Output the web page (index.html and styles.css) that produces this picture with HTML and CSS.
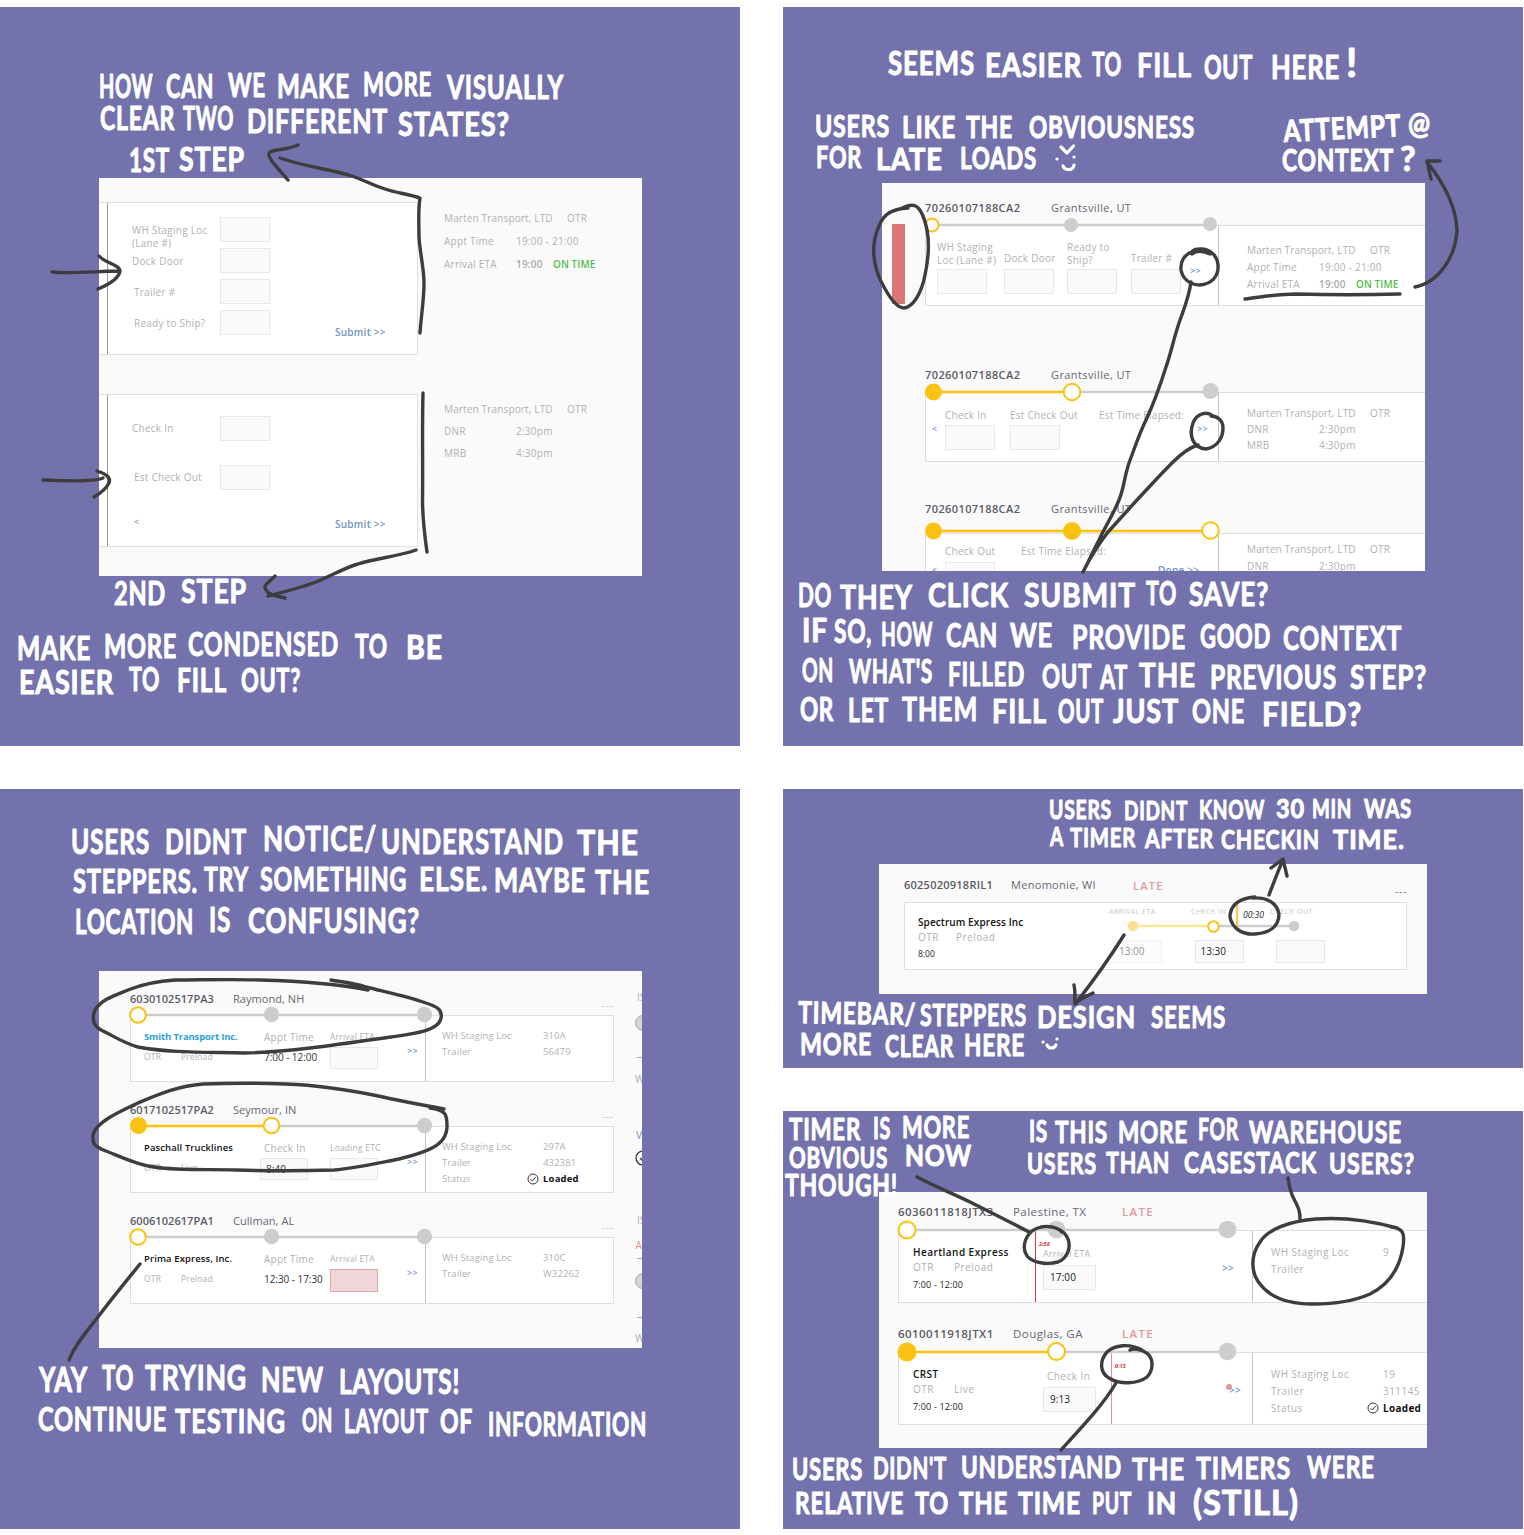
FILE: index.html
```
<!DOCTYPE html>
<html lang="en">
<head>
<meta charset="utf-8">
<title>Usability notes</title>
<link rel="stylesheet" href="styles.css">
</head>
<body>
<main class="board">
  <section class="panel tall">
    <div class="mock mock-forms">
      <div class="form-card">
        <div class="form-body">
          <span class="lbl">WH Staging Loc<br>(Lane #)</span><span class="field"></span><span></span>
          <span class="lbl">Dock Door</span><span class="field"></span><span></span>
          <span class="lbl indent">Trailer #</span><span class="field"></span><span></span>
          <span class="lbl indent">Ready to Ship?</span><span class="field"></span><span class="submit">Submit &gt;&gt;</span>
        </div>
      </div>
      <div class="info first">
        <p><span class="wide">Marten Transport, LTD</span><span>OTR</span></p>
        <p><span class="key">Appt Time</span><span>19:00 - 21:00</span></p>
        <p><span class="key">Arrival ETA</span><b class="time">19:00</b><b class="ok">ON TIME</b></p>
      </div>
      <div class="form-card">
        <div class="form-body second">
          <span class="lbl">Check In</span><span class="field"></span><span></span>
          <span class="lbl indent">Est Check Out</span><span class="field"></span><span></span>
          <span class="back">&lt;</span><span></span><span class="submit">Submit &gt;&gt;</span>
        </div>
      </div>
      <div class="info">
        <p><span class="wide">Marten Transport, LTD</span><span>OTR</span></p>
        <p><span class="key">DNR</span><span>2:30pm</span></p>
        <p><span class="key">MRB</span><span>4:30pm</span></p>
      </div>
    </div>
    <svg class="notes" viewBox="0 7 740 739">
      <g class="hand s32">
        <text x="99" y="98" textLength="54" lengthAdjust="spacingAndGlyphs">HOW</text>
        <text x="166" y="98" textLength="48" lengthAdjust="spacingAndGlyphs">CAN</text>
        <text x="228" y="97" textLength="38" lengthAdjust="spacingAndGlyphs">WE</text>
        <text x="277" y="98" textLength="73" lengthAdjust="spacingAndGlyphs">MAKE</text>
        <text x="363" y="96" textLength="69" lengthAdjust="spacingAndGlyphs">MORE</text>
        <text x="447" y="99" textLength="117" lengthAdjust="spacingAndGlyphs">VISUALLY</text>
        <text x="100" y="130" textLength="75" lengthAdjust="spacingAndGlyphs">CLEAR</text>
        <text x="183" y="130" textLength="51" lengthAdjust="spacingAndGlyphs">TWO</text>
        <text x="247" y="133" textLength="141" lengthAdjust="spacingAndGlyphs">DIFFERENT</text>
        <text x="398" y="136" textLength="112" lengthAdjust="spacingAndGlyphs">STATES?</text>
        <text x="129" y="172" textLength="41" lengthAdjust="spacingAndGlyphs">1ST</text>
        <text x="179" y="171" textLength="66" lengthAdjust="spacingAndGlyphs">STEP</text>
        <text x="114" y="605" textLength="52" lengthAdjust="spacingAndGlyphs">2ND</text>
        <text x="181" y="603" textLength="66" lengthAdjust="spacingAndGlyphs">STEP</text>
        <text x="17" y="660" textLength="74" lengthAdjust="spacingAndGlyphs">MAKE</text>
        <text x="104" y="658" textLength="73" lengthAdjust="spacingAndGlyphs">MORE</text>
        <text x="188" y="656" textLength="151" lengthAdjust="spacingAndGlyphs">CONDENSED</text>
        <text x="355" y="658" textLength="33" lengthAdjust="spacingAndGlyphs">TO</text>
        <text x="406" y="659" textLength="37" lengthAdjust="spacingAndGlyphs">BE</text>
        <text x="19" y="694" textLength="95" lengthAdjust="spacingAndGlyphs">EASIER</text>
        <text x="129" y="691" textLength="31" lengthAdjust="spacingAndGlyphs">TO</text>
        <text x="177" y="692" textLength="50" lengthAdjust="spacingAndGlyphs">FILL</text>
        <text x="241" y="692" textLength="60" lengthAdjust="spacingAndGlyphs">OUT?</text>
      </g>
      <g class="ink">
        <path d="M298 145C287 150 276 149 270 152C265 156 277 167 288 180M280 158C303 166 327 169 349 175C362 179 372 185 385 189C396 193 409 194 420 198C418 210 419 224 419 237C420 254 424 268 424 283C424 300 421 317 420 333"/>
        <path d="M52 272C74 274 97 271 119 271M99 256C105 263 120 265 120 271C119 278 110 284 98 289"/>
        <path d="M43 480C64 481 94 482 103 478M97 471C106 474 111 477 109 483C106 489 101 493 94 497"/>
        <path d="M423 393C422 430 423 467 422.500 503C423 523 425 538 427 552M416 550C396 557 377 558 358 564C344 568 331 576 316 582C300 588 284 592 268 596M275 576C270 582 262 585 266 590C269 596 278 596 285 598"/>
      </g>
    </svg>
  </section>

  <section class="panel tall">
    <div class="mock mock-steps">
      <i class="flag"></i>
      <article class="load">
        <h3><b>70260107188CA2</b><span>Grantsville, UT</span></h3>
        <div class="card c1">
          <svg class="stepper" viewBox="925 215 300 20"><path class="gl" d="M937 225H1210"/><circle class="ring" cx="932" cy="225" r="6.500"/><circle class="gd" cx="1071" cy="225" r="7"/><circle class="gd" cx="1210" cy="224" r="7"/></svg>
          <div class="cell"><span class="two">WH Staging<br>Loc (Lane #)</span><i class="field"></i></div>
          <div class="cell"><span class="one">Dock Door</span><i class="field"></i></div>
          <div class="cell"><span class="two">Ready to<br>Ship?</span><i class="field"></i></div>
          <div class="cell"><span class="one">Trailer #</span><i class="field"></i></div>
          <div class="next">&gt;&gt;</div>
          <div class="details">
            <p><span class="wide">Marten Transport, LTD</span><span>OTR</span></p>
            <p><span class="key">Appt Time</span><span>19:00 - 21:00</span></p>
            <p><span class="key">Arrival ETA</span><b class="time">19:00</b><b class="ok">ON TIME</b></p>
          </div>
        </div>
      </article>
      <article class="load">
        <h3><b>70260107188CA2</b><span>Grantsville, UT</span></h3>
        <div class="card c2">
          <svg class="stepper" viewBox="925 382 300 20"><path class="yl" d="M933 392H1072"/><path class="gl" d="M1072 392H1210"/><circle class="yd" cx="933.500" cy="392" r="8.500"/><circle class="ring" cx="1072" cy="392" r="8.300"/><circle class="gd" cx="1210.500" cy="391" r="8"/></svg>
          <div class="prev">&lt;</div>
          <div class="cell"><span>Check In</span><i class="field"></i></div>
          <div class="cell"><span>Est Check Out</span><i class="field"></i></div>
          <div class="cell"><span>Est Time Elapsed:</span></div>
          <div class="next">&gt;&gt;</div>
          <div class="details">
            <p><span class="wide">Marten Transport, LTD</span><span>OTR</span></p>
            <p><span class="key">DNR</span><span>2:30pm</span></p>
            <p><span class="key">MRB</span><span>4:30pm</span></p>
          </div>
        </div>
      </article>
      <article class="load">
        <h3><b>70260107188CA2</b><span>Grantsville, UT</span></h3>
        <div class="card c3">
          <svg class="stepper" viewBox="925 523 300 20"><path class="yl" d="M933 531H1210"/><circle class="yd" cx="933.500" cy="531" r="8.500"/><circle class="yd" cx="1072" cy="531" r="9"/><circle class="ring" cx="1210.500" cy="530.500" r="8.300"/></svg>
          <div class="prev">&lt;</div>
          <div class="cell"><span>Check Out</span><i class="field"></i></div>
          <div class="cell"><span>Est Time Elapsed:</span></div>
          <div class="next done">Done &gt;&gt;</div>
          <div class="details">
            <p><span class="wide">Marten Transport, LTD</span><span>OTR</span></p>
            <p><span class="key">DNR</span><span>2:30pm</span></p>
          </div>
        </div>
      </article>
    </div>
    <svg class="notes" viewBox="783 7 740 739">
      <g class="hand s32">
        <text x="888" y="75" textLength="87" lengthAdjust="spacingAndGlyphs">SEEMS</text>
        <text x="985" y="77" textLength="97" lengthAdjust="spacingAndGlyphs">EASIER</text>
        <text x="1092" y="76" textLength="30" lengthAdjust="spacingAndGlyphs">TO</text>
        <text x="1137" y="77" textLength="55" lengthAdjust="spacingAndGlyphs">FILL</text>
        <text x="1204" y="79" textLength="49" lengthAdjust="spacingAndGlyphs">OUT</text>
        <text x="1271" y="79" textLength="69" lengthAdjust="spacingAndGlyphs">HERE</text>
        <text class="s40" x="1346" y="77">!</text>
        <g class="s30">
          <text x="815" y="137" textLength="75" lengthAdjust="spacingAndGlyphs">USERS</text>
          <text x="902" y="138" textLength="54" lengthAdjust="spacingAndGlyphs">LIKE</text>
          <text x="966" y="138" textLength="47" lengthAdjust="spacingAndGlyphs">THE</text>
          <text x="1029" y="138" textLength="166" lengthAdjust="spacingAndGlyphs">OBVIOUSNESS</text>
          <text x="816" y="168" textLength="46" lengthAdjust="spacingAndGlyphs">FOR</text>
          <text x="876" y="170" textLength="67" lengthAdjust="spacingAndGlyphs">LATE</text>
          <text x="960" y="169" textLength="77" lengthAdjust="spacingAndGlyphs">LOADS</text>
          <text x="1284" y="142" textLength="118" lengthAdjust="spacingAndGlyphs" transform="rotate(-3 1284 142)">ATTEMPT</text>
          <text x="1408" y="134" textLength="23" lengthAdjust="spacingAndGlyphs">@</text>
          <text x="1282" y="171" textLength="112" lengthAdjust="spacingAndGlyphs">CONTEXT</text>
          <text class="s34" x="1400" y="171">?</text>
        </g>
        <text x="798" y="607" textLength="34" lengthAdjust="spacingAndGlyphs">DO</text>
        <text x="840" y="609" textLength="73" lengthAdjust="spacingAndGlyphs">THEY</text>
        <text x="928" y="607" textLength="81" lengthAdjust="spacingAndGlyphs">CLICK</text>
        <text x="1024" y="607" textLength="112" lengthAdjust="spacingAndGlyphs">SUBMIT</text>
        <text x="1146" y="605" textLength="31" lengthAdjust="spacingAndGlyphs">TO</text>
        <text x="1189" y="606" textLength="80" lengthAdjust="spacingAndGlyphs">SAVE?</text>
        <text x="802" y="642" textLength="26" lengthAdjust="spacingAndGlyphs">IF</text>
        <text x="834" y="643" textLength="38" lengthAdjust="spacingAndGlyphs">SO,</text>
        <text x="881" y="646" textLength="52" lengthAdjust="spacingAndGlyphs">HOW</text>
        <text x="946" y="647" textLength="52" lengthAdjust="spacingAndGlyphs">CAN</text>
        <text x="1010" y="647" textLength="43" lengthAdjust="spacingAndGlyphs">WE</text>
        <text x="1072" y="649" textLength="114" lengthAdjust="spacingAndGlyphs">PROVIDE</text>
        <text x="1200" y="648" textLength="71" lengthAdjust="spacingAndGlyphs">GOOD</text>
        <text x="1283" y="650" textLength="119" lengthAdjust="spacingAndGlyphs">CONTEXT</text>
        <text x="802" y="682" textLength="32" lengthAdjust="spacingAndGlyphs">ON</text>
        <text x="849" y="683" textLength="84" lengthAdjust="spacingAndGlyphs">WHAT'S</text>
        <text x="948" y="686" textLength="77" lengthAdjust="spacingAndGlyphs">FILLED</text>
        <text x="1042" y="688" textLength="50" lengthAdjust="spacingAndGlyphs">OUT</text>
        <text x="1100" y="689" textLength="28" lengthAdjust="spacingAndGlyphs">AT</text>
        <text x="1139" y="687" textLength="57" lengthAdjust="spacingAndGlyphs">THE</text>
        <text x="1210" y="689" textLength="127" lengthAdjust="spacingAndGlyphs">PREVIOUS</text>
        <text x="1350" y="689" textLength="77" lengthAdjust="spacingAndGlyphs">STEP?</text>
        <text x="800" y="721" textLength="34" lengthAdjust="spacingAndGlyphs">OR</text>
        <text x="848" y="722" textLength="41" lengthAdjust="spacingAndGlyphs">LET</text>
        <text x="902" y="721" textLength="76" lengthAdjust="spacingAndGlyphs">THEM</text>
        <text x="992" y="723" textLength="55" lengthAdjust="spacingAndGlyphs">FILL</text>
        <text x="1058" y="723" textLength="46" lengthAdjust="spacingAndGlyphs">OUT</text>
        <text x="1113" y="723" textLength="66" lengthAdjust="spacingAndGlyphs">JUST</text>
        <text x="1192" y="723" textLength="53" lengthAdjust="spacingAndGlyphs">ONE</text>
        <text x="1262" y="726" textLength="100" lengthAdjust="spacingAndGlyphs">FIELD?</text>
      </g>
      <path class="face" d="M1057 159h.1M1074 157h.1M1061 147l6 6l6.500 -7M1063 166c2 5 10 5 11 -1"/>
      <g class="ink">
        <path d="M908 208C893 209 884 213 879 226C870 246 873 268 884 287C891 300 898 308 904 308C914 307 922 291 925 275C930 252 930 233 923 216C918 204 913 203 902 208"/>
        <path d="M1192 252C1185 254 1180 261 1181 270C1183 280 1191 285 1200 285C1211 284 1219 277 1218 265C1217 254 1208 248 1199 249C1193 249 1191 252 1192 254C1197 250 1204 251 1210 254M1191 282C1189 297 1184 309 1180 320C1174 337 1171 353 1166 367C1160 386 1154 403 1146 420C1139 434 1134 450 1129 463C1124 478 1124 488 1119 500C1113 515 1105 527 1099 540C1093 551 1089 561 1083 572C1090 558 1098 545 1108 532C1118 521 1127 511 1137 500C1150 486 1161 474 1173 462C1181 454 1188 448 1198 445"/>
        <path d="M1213 416C1207 411 1197 413 1193 423C1188 437 1194 448 1206 449C1218 447 1223 437 1223 428C1223 420 1217 416 1211 416"/>
        <path d="M1245 299C1262 297 1277 294 1296 294C1331 295 1366 295 1400 294M1415 287C1440 282 1456 255 1457 230C1456 205 1443 182 1427 162M1440 161H1427L1431 179"/>
      </g>
    </svg>
  </section>

  <section class="panel tall">
    <div class="mock mock-list">
      <div class="loads">
        <article class="load">
          <h3><b>6030102517PA3</b><span>Raymond, NH</span><i class="more">---</i></h3>
          <div class="card">
            <svg class="stepper" viewBox="130 1005 310 20"><path class="gl" d="M138 1015H424"/><circle class="ring" cx="138" cy="1015" r="7.800"/><circle class="gd" cx="271.500" cy="1014.500" r="7.700"/><circle class="gd" cx="424.500" cy="1014.500" r="7.700"/></svg>
            <div class="cell"><b class="link">Smith Transport Inc.</b><span class="sm"><u>OTR</u>Preload</span></div>
            <div class="cell"><span>Appt Time</span><span class="val">7:00 - 12:00</span></div>
            <div class="cell"><span class="sm">Arrival ETA</span><i class="field"></i></div>
            <div class="next">&gt;&gt;</div>
            <div class="details"><p><span class="key">WH Staging Loc</span><span>310A</span></p><p><span class="key">Trailer</span><span>56479</span></p></div>
          </div>
        </article>
        <article class="load">
          <h3><b>6017102517PA2</b><span>Seymour, IN</span><i class="more">---</i></h3>
          <div class="card">
            <svg class="stepper" viewBox="130 1005 310 20"><path class="yl" d="M138 1015H271"/><path class="gl" d="M271 1015H424"/><circle class="yd" cx="138.500" cy="1014.500" r="8.600"/><circle class="ring" cx="271.500" cy="1014.500" r="7.800"/><circle class="gd" cx="424.500" cy="1014.500" r="7.700"/></svg>
            <div class="cell"><b>Paschall Trucklines</b><span class="sm"><u>OTR</u>Live</span></div>
            <div class="cell"><span>Check In</span><i class="field checkin">8:40</i></div>
            <div class="cell"><span class="sm">Loading ETC</span><i class="field"></i></div>
            <div class="next">&gt;&gt;</div>
            <div class="details"><p><span class="key">WH Staging Loc</span><span>297A</span></p><p><span class="key">Trailer</span><span>432381</span></p><p><span class="key">Status</span><b class="loaded"><svg class="tick" viewBox="0 0 12 12"><circle cx="6" cy="6" r="5"/><path d="M3.500 6.200L5.300 8L8.700 4"/></svg>Loaded</b></p></div>
          </div>
        </article>
        <article class="load">
          <h3><b>6006102617PA1</b><span>Cullman, AL</span><i class="more">---</i></h3>
          <div class="card">
            <svg class="stepper" viewBox="130 1005 310 20"><path class="gl" d="M138 1015H424"/><circle class="ring" cx="138" cy="1015" r="7.800"/><circle class="gd" cx="271.500" cy="1014.500" r="7.700"/><circle class="gd" cx="424.500" cy="1014.500" r="7.700"/></svg>
            <div class="cell"><b>Prima Express, Inc.</b><span class="sm"><u>OTR</u>Preload</span></div>
            <div class="cell"><span>Appt Time</span><span class="val">12:30 - 17:30</span></div>
            <div class="cell"><span class="sm">Arrival ETA</span><i class="field late-field"></i></div>
            <div class="next">&gt;&gt;</div>
            <div class="details"><p><span class="key">WH Staging Loc</span><span>310C</span></p><p><span class="key">Trailer</span><span>W32262</span></p></div>
          </div>
        </article>
      </div>
      <svg class="edge" viewBox="634 971 8 377">
        <text x="637" y="1001">IS</text><text x="635" y="1083">W</text><text class="blue" x="636" y="1139">V</text><text x="637" y="1224">IS</text><text class="red" x="635.500" y="1249">A</text><text x="635" y="1342">W</text>
        <path class="thin" d="M637 1057.500H642M637 1258.500H642M637 1317.500H642"/>
        <circle class="gc" cx="643" cy="1023" r="7.500"/><circle class="gc" cx="643" cy="1281" r="7.500"/><circle class="bc" cx="643" cy="1158" r="7"/><path class="bc" d="M640 1158l3 3"/>
      </svg>
    </div>
    <svg class="notes" viewBox="0 789 740 740">
      <g class="hand s34">
        <text x="71" y="854" textLength="79" lengthAdjust="spacingAndGlyphs">USERS</text>
        <text x="165" y="854" textLength="82" lengthAdjust="spacingAndGlyphs">DIDNT</text>
        <text x="263" y="851" textLength="114" lengthAdjust="spacingAndGlyphs">NOTICE/</text>
        <text x="381" y="854" textLength="183" lengthAdjust="spacingAndGlyphs">UNDERSTAND</text>
        <text x="577" y="855" textLength="62" lengthAdjust="spacingAndGlyphs">THE</text>
        <g class="s32">
          <text x="73" y="893" textLength="125" lengthAdjust="spacingAndGlyphs">STEPPERS.</text>
          <text x="204" y="891" textLength="45" lengthAdjust="spacingAndGlyphs">TRY</text>
          <text x="260" y="891" textLength="147" lengthAdjust="spacingAndGlyphs">SOMETHING</text>
          <text x="419" y="891" textLength="69" lengthAdjust="spacingAndGlyphs">ELSE.</text>
          <text x="494" y="892" textLength="92" lengthAdjust="spacingAndGlyphs">MAYBE</text>
          <text x="595" y="894" textLength="55" lengthAdjust="spacingAndGlyphs">THE</text>
        </g>
        <text x="75" y="934" textLength="119" lengthAdjust="spacingAndGlyphs">LOCATION</text>
        <text x="209" y="932" textLength="22" lengthAdjust="spacingAndGlyphs">IS</text>
        <text x="248" y="933" textLength="172" lengthAdjust="spacingAndGlyphs">CONFUSING?</text>
        <text x="39" y="1392" textLength="49" lengthAdjust="spacingAndGlyphs">YAY</text>
        <text x="102" y="1390" textLength="32" lengthAdjust="spacingAndGlyphs">TO</text>
        <text x="145" y="1390" textLength="102" lengthAdjust="spacingAndGlyphs">TRYING</text>
        <text x="261" y="1392" textLength="63" lengthAdjust="spacingAndGlyphs">NEW</text>
        <text x="339" y="1394" textLength="121" lengthAdjust="spacingAndGlyphs">LAYOUTS!</text>
        <g class="s32">
          <text x="38" y="1431" textLength="129" lengthAdjust="spacingAndGlyphs">CONTINUE</text>
          <text x="175" y="1433" textLength="111" lengthAdjust="spacingAndGlyphs">TESTING</text>
          <text x="302" y="1432" textLength="31" lengthAdjust="spacingAndGlyphs">ON</text>
          <text x="344" y="1433" textLength="85" lengthAdjust="spacingAndGlyphs">LAYOUT</text>
          <text x="440" y="1433" textLength="33" lengthAdjust="spacingAndGlyphs">OF</text>
          <text x="488" y="1436" textLength="159" lengthAdjust="spacingAndGlyphs">INFORMATION</text>
        </g>
      </g>
      <g class="ink">
        <path d="M368 990C338 984 296 981 260 980C232 979 200 980 175 980C157 981 143 984 128 990C113 996 101 1000 95 1010C91 1020 94 1026 101 1030C112 1035 123 1043 138 1047C169 1053 208 1052 244 1053C290 1052 342 1044 391 1037C413 1034 439 1031 441 1018C443 1009 435 1006 426 1003C407 996 386 992 366 987C354 983 342 982 331 980"/>
        <path d="M444 1109C424 1105 404 1102 383 1097C350 1090 317 1085 285 1084C258 1083 230 1083 203 1084C177 1086 157 1095 138 1103C119 1112 96 1122 93 1135C92 1145 96 1146 101 1149C117 1155 136 1165 154 1167C181 1171 209 1169 236 1170C268 1171 302 1171 334 1170C357 1168 378 1163 399 1159C411 1156 423 1153 432 1148C442 1143 447 1136 447 1126C447 1116 447 1110 430 1108"/>
        <path d="M140 1264C127 1280 113 1297 101 1313C90 1328 76 1342 69 1360"/>
      </g>
    </svg>
  </section>

  <div class="stack">
    <section class="panel short">
      <div class="mock mock-timer">
        <h3><b>6025020918RIL1</b><span>Menomonie, WI</span><em>LATE</em><i class="more dark">---</i></h3>
        <div class="card">
          <div class="who"><b>Spectrum Express Inc</b><span><u>OTR</u>Preload</span><small>8:00</small></div>
          <div class="track">
            <div class="heads"><span>ARRIVAL ETA</span><span>CHECK IN</span><span>CHECK OUT</span></div>
            <svg class="rail" viewBox="1105 919 230 14"><path class="py" d="M1133 926H1208"/><path class="gl" d="M1214 926H1294"/><circle class="pd" cx="1133" cy="926" r="5.300"/><circle class="ring" cx="1213.500" cy="926.500" r="5.300"/><circle class="gd" cx="1294" cy="926" r="5.300"/></svg>
            <div class="inputs"><i class="field faint">13:00</i><i class="field">13:30</i><i class="field"></i></div>
          </div>
          <div class="clock">00:30</div>
        </div>
      </div>
      <svg class="notes" viewBox="783 789 740 279">
        <g class="hand s26">
          <text x="1049" y="819" textLength="63" lengthAdjust="spacingAndGlyphs">USERS</text>
          <text x="1124" y="820" textLength="64" lengthAdjust="spacingAndGlyphs">DIDNT</text>
          <text x="1199" y="819" textLength="66" lengthAdjust="spacingAndGlyphs">KNOW</text>
          <text x="1276" y="818" textLength="29" lengthAdjust="spacingAndGlyphs">30</text>
          <text x="1312" y="818" textLength="40" lengthAdjust="spacingAndGlyphs">MIN</text>
          <text x="1364" y="818" textLength="48" lengthAdjust="spacingAndGlyphs">WAS</text>
          <text x="1050" y="846" textLength="14" lengthAdjust="spacingAndGlyphs">A</text>
          <text x="1070" y="847" textLength="66" lengthAdjust="spacingAndGlyphs">TIMER</text>
          <text x="1145" y="848" textLength="69" lengthAdjust="spacingAndGlyphs">AFTER</text>
          <text x="1221" y="849" textLength="99" lengthAdjust="spacingAndGlyphs">CHECKIN</text>
          <text x="1333" y="849" textLength="72" lengthAdjust="spacingAndGlyphs">TIME.</text>
          <g class="s30">
            <text x="798" y="1023" textLength="118" lengthAdjust="spacingAndGlyphs" transform="rotate(1 798 1023)">TIMEBAR/</text>
            <text x="920" y="1026" textLength="107" lengthAdjust="spacingAndGlyphs">STEPPERS</text>
            <text x="1037" y="1028" textLength="99" lengthAdjust="spacingAndGlyphs">DESIGN</text>
            <text x="1151" y="1028" textLength="75" lengthAdjust="spacingAndGlyphs">SEEMS</text>
            <text x="800" y="1055" textLength="72" lengthAdjust="spacingAndGlyphs">MORE</text>
            <text x="885" y="1057" textLength="69" lengthAdjust="spacingAndGlyphs">CLEAR</text>
            <text x="964" y="1056" textLength="61" lengthAdjust="spacingAndGlyphs">HERE</text>
          </g>
        </g>
        <path class="face" d="M1043 1042h.1M1057 1039h.1M1047 1045c2 4 7 4 9 0"/>
        <g class="ink">
          <path d="M1255 897C1237 898 1230 907 1230 917C1232 928 1242 935 1255 934C1269 933 1279 927 1279 914C1277 903 1267 897 1253 898"/>
          <path d="M1269 895C1274 882 1278 871 1283 860M1271 868L1283 859L1287 876M1124 935C1109 959 1094 980 1076 1003M1074 985C1076 995 1074 999 1075 1004C1081 998 1087 996 1093 993"/>
        </g>
      </svg>
    </section>

    <section class="panel mid">
      <div class="mock mock-late">
        <article class="load">
          <h3><b>6036011818JTX3</b><span>Palestine, TX</span><em>LATE</em></h3>
          <div class="card">
            <svg class="stepper" viewBox="898 1220 340 20"><path class="gl" d="M907 1230H1227"/><circle class="ring" cx="907" cy="1230" r="8.500"/><circle class="gd" cx="1056.500" cy="1229.500" r="8.800"/><circle class="gd" cx="1227.500" cy="1229.500" r="8.800"/></svg>
            <div class="who"><b>Heartland Express</b><span><u>OTR</u>Preload</span><small>7:00 - 12:00</small></div>
            <div class="slot timed"><em class="left">2:58</em><span class="lab">Arrival ETA</span><i class="field">17:00</i></div>
            <div class="next">&gt;&gt;</div>
            <div class="details"><p><span class="key">WH Staging Loc</span><span>9</span></p><p><span class="key">Trailer</span></p></div>
          </div>
        </article>
        <article class="load">
          <h3><b>6010011918JTX1</b><span>Douglas, GA</span><em>LATE</em></h3>
          <div class="card later">
            <svg class="stepper" viewBox="898 1220 340 20"><path class="yl" d="M907 1230H1056"/><path class="gl" d="M1056 1230H1227"/><circle class="yd" cx="907" cy="1230" r="9.500"/><circle class="ring" cx="1056.500" cy="1229.500" r="8.500"/><circle class="gd" cx="1227.500" cy="1229.500" r="8.800"/></svg>
            <div class="who"><b>CRST</b><span><u>OTR</u>Live</span><small>7:00 - 12:00</small></div>
            <div class="slot"><span class="lab">Check In</span><i class="field">9:13</i></div>
            <div class="timed"><em class="left">0:15</em></div>
            <div class="next alert">&gt;&gt;</div>
            <div class="details"><p><span class="key">WH Staging Loc</span><span>19</span></p><p><span class="key">Trailer</span><span>311145</span></p><p><span class="key">Status</span><b class="loaded"><svg class="tick" viewBox="0 0 12 12"><circle cx="6" cy="6" r="5"/><path d="M3.500 6.200L5.300 8L8.700 4"/></svg>Loaded</b></p></div>
          </div>
        </article>
      </div>
      <svg class="notes" viewBox="783 1111 740 418">
        <g class="hand s30">
          <text x="789" y="1140" textLength="72" lengthAdjust="spacingAndGlyphs">TIMER</text>
          <text x="873" y="1139" textLength="18" lengthAdjust="spacingAndGlyphs">IS</text>
          <text x="902" y="1138" textLength="68" lengthAdjust="spacingAndGlyphs">MORE</text>
          <g class="s28">
            <text x="789" y="1168" textLength="99" lengthAdjust="spacingAndGlyphs">OBVIOUS</text>
            <text x="905" y="1166" textLength="67" lengthAdjust="spacingAndGlyphs">NOW</text>
          </g>
          <text x="785" y="1196" textLength="113" lengthAdjust="spacingAndGlyphs">THOUGH!</text>
          <text x="1029" y="1142" textLength="19" lengthAdjust="spacingAndGlyphs">IS</text>
          <text x="1055" y="1143" textLength="53" lengthAdjust="spacingAndGlyphs">THIS</text>
          <text x="1118" y="1143" textLength="70" lengthAdjust="spacingAndGlyphs">MORE</text>
          <text x="1198" y="1140" textLength="41" lengthAdjust="spacingAndGlyphs">FOR</text>
          <text x="1249" y="1143" textLength="153" lengthAdjust="spacingAndGlyphs">WAREHOUSE</text>
          <g class="s28">
            <text x="1027" y="1174" textLength="70" lengthAdjust="spacingAndGlyphs">USERS</text>
            <text x="1106" y="1173" textLength="64" lengthAdjust="spacingAndGlyphs">THAN</text>
            <text x="1184" y="1173" textLength="133" lengthAdjust="spacingAndGlyphs">CASESTACK</text>
            <text x="1329" y="1174" textLength="86" lengthAdjust="spacingAndGlyphs">USERS?</text>
          </g>
          <text x="792" y="1480" textLength="71" lengthAdjust="spacingAndGlyphs">USERS</text>
          <text x="873" y="1479" textLength="74" lengthAdjust="spacingAndGlyphs">DIDN'T</text>
          <text x="961" y="1478" textLength="161" lengthAdjust="spacingAndGlyphs">UNDERSTAND</text>
          <text x="1132" y="1480" textLength="53" lengthAdjust="spacingAndGlyphs">THE</text>
          <text x="1196" y="1479" textLength="95" lengthAdjust="spacingAndGlyphs">TIMERS</text>
          <text x="1307" y="1478" textLength="68" lengthAdjust="spacingAndGlyphs">WERE</text>
          <text x="795" y="1514" textLength="109" lengthAdjust="spacingAndGlyphs">RELATIVE</text>
          <text x="915" y="1514" textLength="34" lengthAdjust="spacingAndGlyphs">TO</text>
          <text x="959" y="1514" textLength="49" lengthAdjust="spacingAndGlyphs">THE</text>
          <text x="1018" y="1514" textLength="63" lengthAdjust="spacingAndGlyphs">TIME</text>
          <text x="1092" y="1514" textLength="40" lengthAdjust="spacingAndGlyphs">PUT</text>
          <text x="1147" y="1514" textLength="30" lengthAdjust="spacingAndGlyphs">IN</text>
          <text class="s34" x="1193" y="1515" textLength="106" lengthAdjust="spacingAndGlyphs">(STILL)</text>
        </g>
        <g class="ink">
          <path d="M917 1177C936 1187 954 1194 972 1203C992 1213 1012 1223 1029 1232M1062 1232C1055 1225 1040 1225 1032 1231C1024 1238 1022 1249 1027 1256C1033 1263 1047 1265 1058 1262C1068 1258 1071 1247 1068 1239C1064 1229 1052 1225 1041 1227"/>
          <path d="M1288 1178C1289 1185 1290 1192 1294 1199C1298 1207 1300 1210 1300 1219M1397 1228C1372 1221 1344 1217 1316 1219C1290 1221 1268 1229 1260 1242C1250 1256 1251 1273 1260 1284C1272 1300 1294 1304 1313 1304C1332 1304 1352 1302 1370 1294C1390 1284 1400 1266 1403 1247C1405 1233 1403 1228 1391 1227"/>
          <path d="M1142 1350C1129 1343 1115 1345 1107 1352C1099 1361 1100 1373 1109 1378C1120 1385 1138 1384 1147 1377C1153 1371 1154 1360 1148 1354C1142 1349 1132 1348 1130 1350M1116 1383C1103 1405 1082 1427 1061 1450"/>
        </g>
      </svg>
    </section>
  </div>
</main>
</body>
</html>
```

FILE: styles.css
```
* { box-sizing: border-box; margin: 0; padding: 0; }
body {
  width: 1524px; height: 1535px; background: #fff; overflow: hidden;
  font-family: "Open Sans", "Noto Sans", sans-serif;
  font-size: 10px; letter-spacing: .25px; color: #b1b1b1;
}
i, em { font-style: normal; }
u { text-decoration: none; }
p { display: flex; white-space: nowrap; }
h3 { display: flex; font-size: 11px; font-weight: 400; letter-spacing: .4px; color: #666670; line-height: 16px; }
h3 b { font-weight: 600; color: #5a5a64; }
h3 em { color: #e29999; font-weight: 600; letter-spacing: 1.3px; }

.board { display: grid; grid-template-columns: 740px 740px; column-gap: 43px; row-gap: 43px; padding-top: 7px; }
.panel { position: relative; background: #7472ac; overflow: hidden; }
.tall { height: 739px; }
.board > .panel:nth-child(3) { height: 740px; }
.stack { display: flex; flex-direction: column; gap: 43px; }
.short { height: 279px; }
.mid { height: 418px; }
.mock { background: #fafafa; overflow: hidden; width: 543px; }

/* handwriting layer */
.notes { position: absolute; inset: 0; width: 100%; height: 100%; }
.hand { fill: #fff; stroke: #fff; stroke-width: 1px; stroke-linejoin: round; font-family: Lato, sans-serif; font-weight: 700; letter-spacing: 1px; }
.s26 { font-size: 26px; }
.s28 { font-size: 28px; }
.s30 { font-size: 30px; }
.s32 { font-size: 32px; }
.s34 { font-size: 34px; }
.s40 { font-size: 40px; }
.ink { fill: none; stroke: #3d3d3e; stroke-width: 3.4px; stroke-linecap: round; stroke-linejoin: round; }
.face { fill: none; stroke: #fff; stroke-width: 3.2px; stroke-linecap: round; stroke-linejoin: round; }

/* shared pieces */
.field { display: block; width: 50px; height: 25px; border: 1px solid #e8e8e8; background: #fafafa; }
.card { position: relative; display: grid; background: #fff; border: 1px solid #dedede; }
.stepper { position: absolute; overflow: visible; left: -1px; top: -11px; height: 20px; }
.gl, .yl, .py { fill: none; stroke: #cdcdcd; stroke-width: 2.5px; }
.yl { stroke: #fac213; }
.py { stroke: #fde69a; }
.gd { fill: #cdcdcd; }
.yd { fill: #fac213; }
.pd { fill: #fde094; }
.ring { fill: #fff; stroke: #fac213; stroke-width: 2px; }
.next, .prev, .submit, .back { color: #7092c4; font-weight: 600; }
.next, .prev { font-size: 9px; }
.time { width: 37px; font-weight: 600; color: #aaa; letter-spacing: .2px; }
.ok { color: #52bd4c; font-weight: 600; letter-spacing: .1px; }
.wide { width: 123px; letter-spacing: .15px; }
.key { width: 72px; }
.details { border-left: 1px solid #c4c4c4; }
.loaded { display: flex; color: #111; font-weight: 700; letter-spacing: .2px; }
.tick { width: 12px; height: 12px; margin: 2px 4px 0 -16px; fill: none; stroke: #333; }
.more { color: #c8c8c8; letter-spacing: .8px; font-size: 10px; }
.more.dark { color: #777; }

/* two stacked forms */
.mock-forms { margin: 171px 0 0 99px; height: 398px; display: grid; grid-template: 192px 1fr / 319px 1fr; padding-top: 24px; }
.form-card { height: 153px; background: #fff; border: 1px solid #e0e0e0; border-left: 0; padding-left: 8px; }
.form-body { height: 151px; border-left: 1px solid #999; display: grid; grid-template: repeat(4, 31px) / 88px 50px 1fr; padding: 14px 0 0 24px; line-height: 13px; }
.form-body .lbl { padding-top: 7px; white-space: nowrap; }
.form-body .indent { padding-left: 2px; }
.form-body .submit { padding: 16px 0 0 65px; white-space: nowrap; }
.form-body.second { grid-template-rows: 49px 49px 31px; padding-top: 21px; }
.form-body.second .lbl { padding-top: 6px; }
.form-body.second .submit { padding-top: 4px; }
.back { padding: 1px 0 0 2px; font-size: 9px; }
.info { padding: 4px 0 0 26px; line-height: 22px; }
.info.first { line-height: 23px; padding-top: 5px; }

/* stepper mock with late flag */
.mock-steps { position: relative; margin: 176px 0 0 99px; height: 388px; padding: 17px 0 0 43px; }
.flag { position: absolute; left: 10px; top: 41px; width: 13px; height: 80px; background: #d97777; }
.mock-steps h3 { height: 25px; }
.mock-steps h3 b { width: 126px; }
.mock-steps .load:nth-of-type(1) { height: 167px; }
.mock-steps .load:nth-of-type(2) { height: 134px; }
.mock-steps .load:nth-of-type(3) h3 { height: 32px; }
.mock-steps .card { border-right: 0; }
.mock-steps .stepper { width: 300px; }
.mock-steps .cell { white-space: nowrap; line-height: 13px; }
.mock-steps .cell span { display: block; }
.c1 { height: 81px; grid-template-columns: 67px 63px 64px 59px 28px 1fr; padding-left: 11px; }
.c1 .two { height: 43px; padding-top: 15px; }
.c1 .one { height: 43px; padding-top: 26px; }
.c1 .next { padding-top: 38px; }
.c1 .details { padding: 16px 0 0 28px; line-height: 17px; }
.c2 { height: 70px; grid-template-columns: 13px 65px 89px 98px 21px 1fr; padding-left: 6px; }
.c2 .cell span { padding-top: 16px; height: 32px; }
.c2 .prev, .c2 .next { padding-top: 29px; }
.c2 .details { padding: 12px 0 0 28px; line-height: 16px; }
.c3 { height: 80px; grid-template-columns: 13px 76px 137px 60px 1fr; padding-left: 6px; }
.c3 .cell span { padding-top: 11px; height: 28px; }
.c3 .prev { padding-top: 29px; }
.c3 .done { padding-top: 29px; font-size: 10px; }
.c3 .details { padding: 7px 0 0 28px; line-height: 17px; }

/* list of loads */
.mock-list { display: grid; grid-template-columns: 1fr 8px; margin: 182px 0 0 99px; height: 377px; }
.loads { padding: 20px 0 0 31px; }
.mock-list .load { height: 111px; }
.mock-list h3 { height: 24px; letter-spacing: .05px; }
.mock-list h3 b { width: 103px; }
.mock-list .more { margin-left: auto; margin-right: 20px; padding-top: 6px; }
.mock-list .card { width: 484px; height: 67px; grid-template-columns: 120px 66px 77px 18px 1fr; padding-left: 13px; }
.mock-list .stepper { width: 310px; }
.mock-list .cell { padding-top: 11px; line-height: 20px; white-space: nowrap; }
.mock-list .cell > b, .mock-list .cell > span { display: block; height: 20px; }
.cell b { color: #111; font-weight: 600; font-size: 9.5px; letter-spacing: .1px; }
.cell .link { color: #2c9fdc; font-weight: 700; letter-spacing: -.15px; }
.sm { font-size: 8.5px; letter-spacing: .2px; }
.sm u { display: inline-block; width: 37px; }
.val { color: #333; letter-spacing: -.05px; }
.mock-list .field { width: 48px; height: 22px; }
.mock-list .checkin { margin-left: -4px; padding-left: 5px; color: #333; line-height: 20px; letter-spacing: .1px; }
.mock-list .late-field { background: #efd6d8; border-color: #e8a5a8; height: 23px; }
.mock-list .next { padding-top: 28px; }
.mock-list .details { padding: 12px 0 0 16px; line-height: 16px; font-size: 9.5px; letter-spacing: .1px; }
.mock-list .key { width: 101px; }
.edge { width: 8px; height: 377px; overflow: hidden; font-size: 10px; fill: #aaa; }
.edge .blue { fill: #7092c4; }
.edge .red { fill: #e29090; }
.edge .thin { stroke: #aaa; }
.edge .gc { fill: #d5d5d5; stroke: #aaa; }
.edge .bc { fill: none; stroke: #333; stroke-width: 1.3px; }

/* timer mock */
.mock-timer { width: 548px; height: 130px; margin: 75px 0 0 96px; padding: 13px 21px 0 25px; }
.mock-timer h3 { height: 25px; }
.mock-timer h3 b { width: 107px; letter-spacing: .25px; }
.mock-timer h3 span { width: 122px; letter-spacing: .3px; }
.mock-timer h3 em { font-size: 11px; padding-top: 1px; }
.mock-timer .more { margin-left: auto; padding-top: 6px; margin-right: -1px; }
.mock-timer .card { width: 503px; height: 68px; grid-template-columns: 187px 1fr; padding-left: 13px; }
.who { padding-top: 12px; line-height: 15px; white-space: nowrap; letter-spacing: .5px; }
.who b, .who span, .who small { display: block; }
.who b { color: #111; font-weight: 600; letter-spacing: .1px; }
.who u { display: inline-block; width: 38px; }
.who small { color: #222; font-size: 8.5px; letter-spacing: 0; line-height: 18px; }
.heads { display: grid; grid-template-columns: 82px 79px 60px; padding: 4px 0 0 4px; font-size: 7px; line-height: 10px; height: 16px; letter-spacing: .5px; color: #c3c8d4; }
.rail { display: block; width: 230px; height: 14px; }
.inputs { display: flex; gap: 32.5px; padding: 7px 0 0 8px; }
.inputs .field { width: 49px; height: 23px; padding-left: 5px; line-height: 21px; color: #222; letter-spacing: 0; }
.inputs .faint { opacity: .5; }
.clock { position: absolute; left: 331px; top: 0; height: 24px; border-left: 2px solid #f8c84a; padding-left: 5px; line-height: 24px; font-size: 8.5px; font-style: italic; color: #222; letter-spacing: 0; }

/* late loads */
.mock-late { width: 548px; height: 256px; margin: 81px 0 0 96px; padding: 12px 0 0 19px; }
.mock-late .load { height: 122px; }
.mock-late h3 { height: 26px; font-size: 11.5px; letter-spacing: .45px; }
.mock-late h3 b { width: 115px; }
.mock-late h3 span { width: 109px; }
.mock-late .card { height: 73px; border-right: 0; grid-template-columns: 122px 187px 30px 1fr; padding-left: 14px; }
.mock-late .stepper { width: 340px; }
.mock-late .who { padding-top: 14px; }
.mock-late .who b { letter-spacing: .45px; }
.mock-late .who u { width: 41px; }
.mock-late .who small { font-size: 9px; letter-spacing: .15px; line-height: 20px; }
.timed { border-left: 1px solid #d8343c; }
.left { display: block; color: #e0303a; font-size: 5.5px; font-weight: 700; font-style: italic; letter-spacing: 0; line-height: 8px; padding: 9px 0 0 3px; height: 17px; }
.slot { padding-left: 7px; }
.slot .left { padding-left: 0; margin-left: -4px; }
.lab { display: block; font-size: 9px; line-height: 12px; height: 17px; letter-spacing: .2px; }
.slot .field { width: 53px; height: 25px; padding-left: 6px; line-height: 23px; color: #222; letter-spacing: .1px; }
.mock-late .next { padding: 30px 0 0; font-size: 10px; }
.mock-late .details { padding: 13px 0 0 18px; line-height: 17px; letter-spacing: .45px; }
.mock-late .key { width: 112px; }
.mock-late .loaded { letter-spacing: .3px; }
.mock-late .later { grid-template-columns: 122px 76px 116px 25px 1fr; }
.later .slot { padding-top: 17px; padding-left: 8px; }
.later .lab { padding-left: 4px; font-size: 10px; letter-spacing: .45px; }
.later .timed { border-color: #ec8c90; }
.later .alert { position: relative; padding-left: 2px; }
.later .alert::before { content: ""; position: absolute; left: -1px; top: 31px; width: 6px; height: 6px; border-radius: 50%; background: #e0999c; }
```
